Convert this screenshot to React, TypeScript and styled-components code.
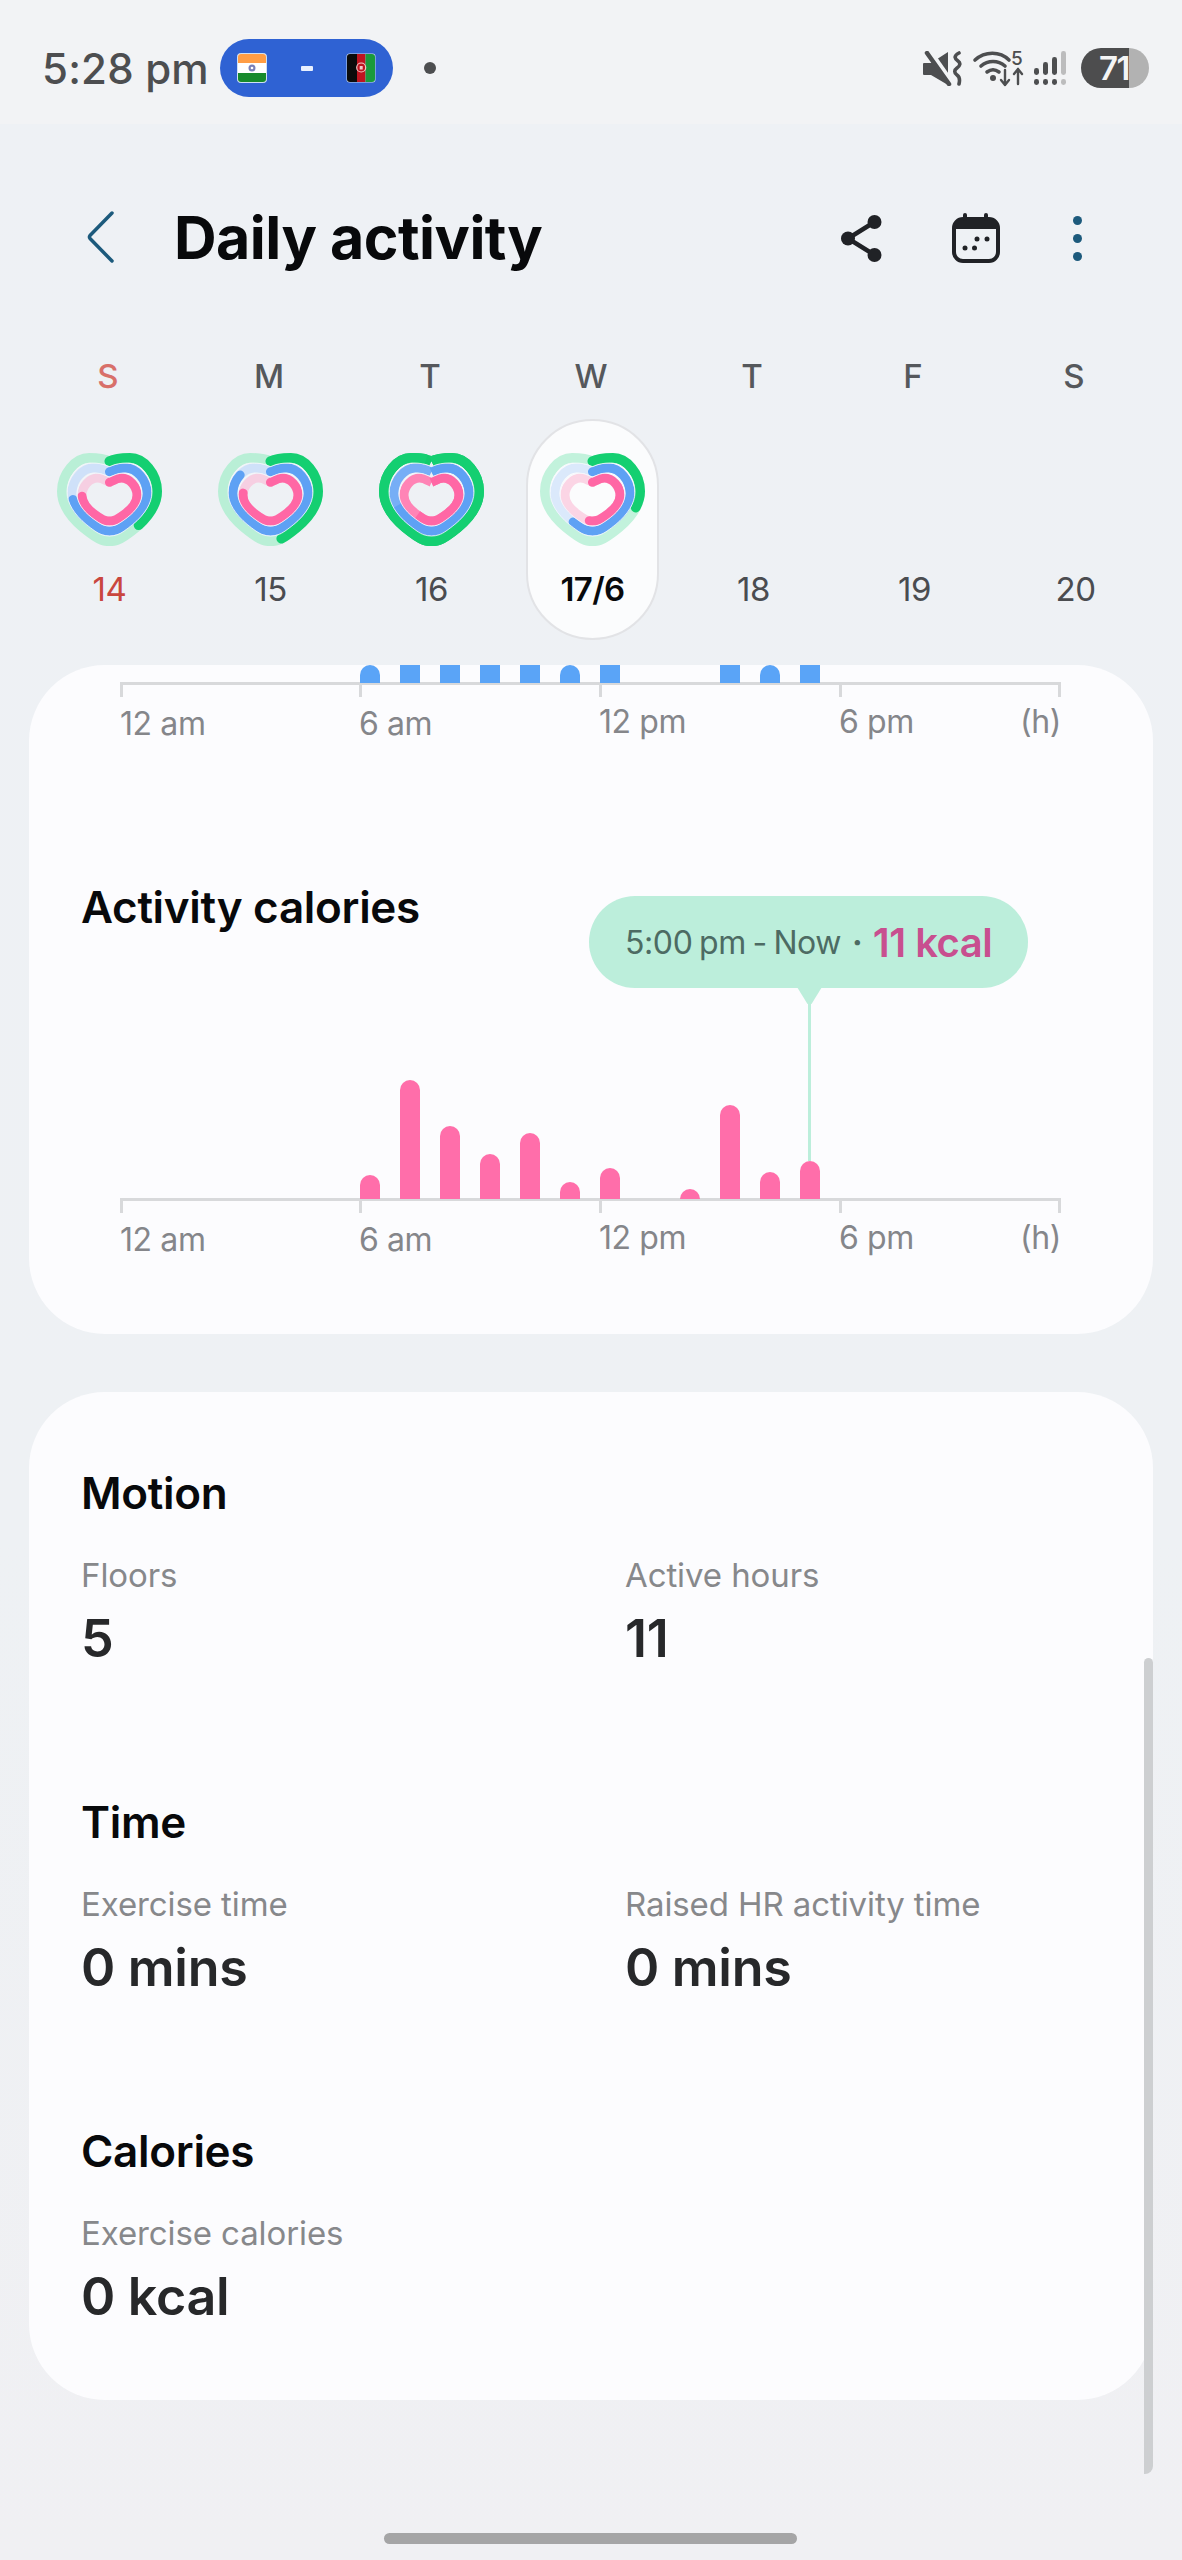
import React from "react";
import styled, { createGlobalStyle } from "styled-components";

const Global = createGlobalStyle`
  html, body { margin: 0; padding: 0; background: #f0f1f4; }
  * { box-sizing: border-box; }
  body { font-family: Inter, "Noto Sans", sans-serif; }
`;

const Screen = styled.div`
  position: relative;
  width: 1182px;
  height: 2560px;
  overflow: hidden;
  background: linear-gradient(180deg, #eef1f5 0%, #eef1f4 60%, #f0f0f3 100%);
`;

const StatusBar = styled.div`
  height: 124px;
  background: #f2f3f5;
  display: flex;
  align-items: center;
  padding: 12px 33px 0 42px;
`;
const Clock = styled.div`
  font-size: 42px;
  font-weight: 500;
  color: #4d4e50;
  letter-spacing: 0.2px;
  width: 178px;
  white-space: nowrap;
`;
const MatchPill = styled.div`
  width: 173px;
  height: 58px;
  border-radius: 29px;
  background: #2f62d3;
  display: flex;
  align-items: center;
  justify-content: space-between;
  padding: 0 17px;
`;
const Dash = styled.span`
  width: 12px;
  height: 5px;
  background: #e8f0ff;
  border-radius: 1px;
`;
const StatusDot = styled.span`
  width: 12px;
  height: 12px;
  border-radius: 50%;
  background: #4d4e50;
  margin-left: 31px;
`;
const StatusIcons = styled.div`
  margin-left: auto;
  display: flex;
  align-items: center;
  gap: 11px;
`;
const Battery = styled.div`
  width: 68px;
  height: 40px;
  border-radius: 20px;
  margin-left: 4px;
  background: linear-gradient(90deg, #4d4d4e 0 48px, #b2b2b2 48px 100%);
  color: #f4f4f4;
  font-size: 33px;
  font-weight: 600;
  line-height: 40px;
  padding-left: 18px;
  letter-spacing: -1.5px;
`;

const Header = styled.header`
  height: 116px;
  margin-top: 56px;
  display: flex;
  align-items: center;
  padding: 0 100px 0 87px;
`;
const BackIcon = styled.svg`
  width: 27px;
  height: 52px;
  flex: none;
  margin-bottom: 2px;
`;
const Title = styled.h1`
  margin: 0 0 0 60px;
  font-size: 59px;
  font-weight: 700;
  color: #08090b;
  letter-spacing: -0.5px;
  line-height: 72px;
`;
const Actions = styled.div`
  margin-left: auto;
  display: flex;
  align-items: center;
`;
const ShareIcon = styled.svg`
  width: 41px;
  height: 47px;
`;
const CalendarIcon = styled.svg`
  width: 48px;
  height: 50px;
  margin-left: 70px;
`;
const KebabIcon = styled.svg`
  width: 9px;
  height: 45px;
  margin-left: 73px;
`;

const Week = styled.div`
  display: grid;
  grid-template-columns: repeat(7, 161px);
  padding: 60px 0 0 29px;
`;
const DayCol = styled.div`
  display: flex;
  flex-direction: column;
  align-items: center;
`;
const DayLetter = styled.div<{ $sun?: boolean }>`
  height: 40px;
  line-height: 40px;
  font-size: 33px;
  font-weight: 500;
  padding-right: 3px;
  color: ${(p) => (p.$sun ? "#d8706a" : "#55585c")};
`;
const DayPill = styled.div<{ $selected?: boolean }>`
  width: 133px;
  height: 221px;
  margin-top: 23px;
  border-radius: 67px;
  padding-top: 34px;
  display: flex;
  flex-direction: column;
  align-items: center;
  background: ${(p) => (p.$selected ? "#fbfcfd" : "transparent")};
  border: 2px solid ${(p) => (p.$selected ? "#e2e3e6" : "transparent")};
`;
const HeartSlot = styled.div`
  width: 105px;
  height: 93px;
  margin-top: -2px;
`;
const DayNum = styled.div<{ $sun?: boolean; $selected?: boolean }>`
  margin-top: 23px;
  height: 40px;
  line-height: 40px;
  font-size: 33px;
  font-weight: ${(p) => (p.$selected ? 600 : 400)};
  letter-spacing: ${(p) => (p.$selected ? "-0.6px" : "-0.4px")};
  color: ${(p) => (p.$sun ? "#c9473e" : p.$selected ? "#08090b" : "#4a4c50")};
`;

const Card = styled.section<{ $top: number; $height: number }>`
  width: 1124px;
  height: ${(p) => p.$height}px;
  margin: ${(p) => p.$top}px 0 0 29px;
  background: #fcfcfe;
  border-radius: 76px;
  overflow: hidden;
  padding-left: 52px;
`;
const Plot = styled.div<{ $height: number }>`
  width: 941px;
  height: ${(p) => p.$height}px;
  margin-left: 39px;
  display: grid;
  grid-template-columns: repeat(24, 40px);
  grid-template-rows: 100%;
  align-items: end;
  overflow: hidden;
`;
const Bar = styled.div<{ $color: string; $flat?: boolean }>`
  width: 20px;
  background: ${(p) => p.$color};
  border-radius: ${(p) => (p.$flat ? "0" : "10px 10px 0 0")};
`;
const Axis = styled.div`
  width: 941px;
  margin-left: 39px;
  display: grid;
  grid-template-columns: 239px 240px 240px 110px 112px;
  border-top: 3px solid #d8d9db;
  margin-top: -1px;
`;
const AxisCell = styled.div<{ $end?: boolean }>`
  display: flex;
  flex-direction: column;
  align-items: ${(p) => (p.$end ? "flex-end" : "flex-start")};
`;
const Tick = styled.div`
  width: 3px;
  height: 12px;
  background: #d8d9db;
`;
const AxisLabel = styled.div<{ $low?: boolean }>`
  margin-top: ${(p) => (p.$low ? 7 : 5)}px;
  line-height: 40px;
  font-size: 32px;
  font-weight: 400;
  letter-spacing: -0.4px;
  color: #85868a;
`;
const CaloriesBlock = styled.div`
  position: relative;
  margin-top: 137px;
`;
const ChartTitle = styled.h2`
  margin: 0 0 66px;
  height: 52px;
  line-height: 52px;
  font-size: 44px;
  font-weight: 600;
  color: #08090b;
  letter-spacing: -0.3px;
`;
const Tooltip = styled.div`
  position: absolute;
  left: 508px;
  top: 15px;
  width: 439px;
  height: 92px;
  border-radius: 46px;
  background: #bceedb;
  display: flex;
  align-items: center;
  padding-left: 36px;
  white-space: nowrap;
`;
const TooltipPointer = styled.div`
  position: absolute;
  left: 208px;
  top: 91px;
  width: 25px;
  height: 17px;
  background: #bceedb;
  clip-path: polygon(0 0, 100% 0, 58% 100%, 42% 100%);
`;
const TooltipStem = styled.div`
  position: absolute;
  left: 219px;
  top: 106px;
  width: 3px;
  height: 159px;
  background: #bceedb;
`;
const TooltipTime = styled.span`
  font-size: 32px;
  letter-spacing: -0.4px;
  word-spacing: -2px;
  color: #4d6b63;
`;
const TooltipSep = styled.span`
  font-size: 32px;
  font-weight: 700;
  color: #4d6b63;
  margin: 0 10px 0 11px;
`;
const TooltipValue = styled.span`
  font-size: 40px;
  font-weight: 600;
  letter-spacing: -0.5px;
  color: #c84f8f;
`;

const StatBody = styled.div`
  padding-top: 74px;
`;
const Stat = styled.div`
  height: 329px;
`;
const StatHeading = styled.h3`
  margin: 0;
  height: 54px;
  line-height: 54px;
  font-size: 44px;
  font-weight: 600;
  color: #08090b;
  letter-spacing: -0.3px;
`;
const StatGrid = styled.div`
  display: grid;
  grid-template-columns: 544px 1fr;
  margin-top: 33px;
`;
const StatLabel = styled.div`
  height: 44px;
  line-height: 44px;
  font-size: 33px;
  letter-spacing: -0.1px;
  color: #87888b;
`;
const StatValue = styled.div`
  margin-top: 10px;
  height: 64px;
  line-height: 64px;
  font-size: 52px;
  font-weight: 600;
  letter-spacing: -0.3px;
  color: #27282a;
`;

const Scrollbar = styled.div`
  position: absolute;
  left: 1144px;
  top: 1658px;
  width: 9px;
  height: 816px;
  background: #cdcfd1;
  border-radius: 5px 5px 9px 0;
`;
const HomeBar = styled.div`
  position: absolute;
  left: 384px;
  top: 2533px;
  width: 413px;
  height: 11px;
  border-radius: 6px;
  background: #a5a5a6;
`;

const heartPath = (hw: number, hh: number, dip: number) => {
  const pt = (u: number, v: number) => `${(52.5 + u * hw).toFixed(2)} ${(46.5 + v * hh).toFixed(2)}`;
  const side = (s: number) => [
    [s * 0.14, -(dip + 0.08), s * 0.28, -1, s * 0.43, -1],
    [s * 0.72, -1, s, -0.62, s, -0.2],
    [s, 0.1, s * 0.82, 0.42, s * 0.55, 0.68],
    [s * 0.4, 0.82, s * 0.28, 0.93, s * 0.17, 0.97],
  ];
  const c = (a: number[]) => `C${pt(a[0], a[1])} ${pt(a[2], a[3])} ${pt(a[4], a[5])}`;
  const left = [
    [-0.07, 1.01, 0.07, 1.01, 0.17, 0.97],
  ];
  const right = side(1);
  return [
    `M${pt(0, -dip)}`,
    ...right.map(c),
    `C${pt(0.07, 1.01)} ${pt(-0.07, 1.01)} ${pt(-0.17, 0.97)}`,
    `C${pt(-0.28, 0.93)} ${pt(-0.4, 0.82)} ${pt(-0.55, 0.68)}`,
    `C${pt(-0.82, 0.42)} ${pt(-1, 0.1)} ${pt(-1, -0.2)}`,
    `C${pt(-1, -0.62)} ${pt(-0.72, -1)} ${pt(-0.43, -1)}`,
    `C${pt(-0.28, -1)} ${pt(-0.14, -(dip + 0.08))} ${pt(0, -dip)}`,
  ].join(" ") + (left.length ? "" : "");
};

type Ring = { hw: number; hh: number; dip: number; w: number; on: string; off: string; soft: string; full: string; part: number };
const RINGS: Ring[] = [
  { hw: 47.5, hh: 41.5, dip: 0.92, w: 10, on: "#14cf71", off: "#b9efd6", soft: "#c2f2dc", full: "#12ca6c", part: 98 },
  { hw: 37.5, hh: 31.5, dip: 0.88, w: 9, on: "#5ea1f4", off: "#cfe1f9", soft: "#dbe9fb", full: "#76aef6", part: 70 },
  { hw: 27.5, hh: 21.5, dip: 0.8, w: 9, on: "#ff67a5", off: "#f6cfe2", soft: "#fbd5e5", full: "#ff84b6", part: 60 },
];
const HAIRS = [
  { hw: 42.5, hh: 36.5, dip: 0.9 },
  { hw: 32.5, hh: 26.5, dip: 0.84 },
];

const Heart = ({ values, light }: { values: number[]; light?: boolean }) => (
  <svg width="105" height="93" viewBox="0 0 105 93" fill="none">
    {RINGS.map((r, i) => {
      const d = heartPath(r.hw, r.hh, r.dip);
      const v = values[i];
      const done = v >= 100;
      return (
        <g key={i}>
          <path d={d} stroke={done ? r.full : light ? r.soft : r.off} strokeWidth={r.w} />
          <path
            d={d}
            stroke={r.on}
            strokeWidth={r.w}
            strokeLinecap={done ? "butt" : "round"}
            pathLength={100}
            strokeDasharray={`${done ? r.part : v} 100`}
          />
        </g>
      );
    })}
    {HAIRS.map((h) => (
      <path key={h.hw} d={heartPath(h.hw, h.hh, h.dip)} stroke="#f4f8fd" strokeWidth={0.9} opacity={0.9} />
    ))}
  </svg>
);

const IndiaFlag = () => (
  <svg width="30" height="30" viewBox="0 0 30 30">
    <rect x="0.5" y="0.5" width="29" height="29" rx="3" fill="#fff" stroke="#cfe0f5" />
    <path d="M1 4a3 3 0 0 1 3-3h22a3 3 0 0 1 3 3v6H1z" fill="#ff9d45" />
    <path d="M1 20h28v6a3 3 0 0 1-3 3H4a3 3 0 0 1-3-3z" fill="#178a2c" />
    <circle cx="15" cy="15" r="3.500" fill="#7a80b8" />
    <circle cx="15" cy="15" r="1.300" fill="#fff" />
  </svg>
);
const AfghanFlag = () => (
  <svg width="30" height="30" viewBox="0 0 30 30">
    <rect x="0.5" y="0.5" width="29" height="29" rx="3" fill="#c8d8ee" />
    <path d="M1 4a3 3 0 0 1 3-3h7v28H4a3 3 0 0 1-3-3z" fill="#0b0b0b" />
    <rect x="11" y="1" width="8.500" height="28" fill="#bf1420" />
    <path d="M19.500 1H26a3 3 0 0 1 3 3v22a3 3 0 0 1-3 3h-6.500z" fill="#1a9a3c" />
    <circle cx="15.200" cy="14.500" r="4.500" fill="none" stroke="#f4c9c9" strokeWidth="1.200" />
    <rect x="13.700" y="13" width="3" height="3.500" fill="#f4c9c9" />
  </svg>
);

const MuteIcon = () => (
  <svg width="39" height="35" viewBox="0 0 39 35" fill="none">
    <path d="M0 13a1 1 0 0 1 1-1h7L25 1v33L8 24H1a1 1 0 0 1-1-1z" fill="#4d4e50" />
    <path d="M0 -2L28 38" stroke="#f2f3f5" strokeWidth="6" transform="translate(4 -1)" />
    <path d="M4 2l22 31" stroke="#4d4e50" strokeWidth="4.500" strokeLinecap="round" />
    <path d="M36 2c-6 3-4 6-1 8s2 5-1 7 -3 5 0 7 3 5 2 9" stroke="#4d4e50" strokeWidth="3.600" strokeLinecap="round" />
  </svg>
);
const WifiIcon = () => (
  <svg width="50" height="35" viewBox="0 0 50 35" fill="none" overflow="visible">
    <path d="M2 9C12 0 27 0 36 9" stroke="#4d4e50" strokeWidth="3.600" strokeLinecap="round" />
    <path d="M8 15c7-6 17-6 24 0" stroke="#4d4e50" strokeWidth="3.600" strokeLinecap="round" />
    <path d="M14 21c4-3 8-3 12 0" stroke="#4d4e50" strokeWidth="3.600" strokeLinecap="round" />
    <circle cx="20" cy="27" r="3" fill="#4d4e50" />
    <text x="38" y="14" fontSize="19" fontFamily="Inter, sans-serif" fontWeight="500" fill="#4d4e50">5</text>
    <path d="M32 19v15M28 29l4 5 4-5" stroke="#4d4e50" strokeWidth="2.400" strokeLinecap="round" strokeLinejoin="round" />
    <path d="M45 33V18M41 23l4-5 4 5" stroke="#4d4e50" strokeWidth="2.400" strokeLinecap="round" strokeLinejoin="round" />
  </svg>
);
const SignalIcon = () => (
  <svg width="32" height="35" viewBox="0 0 32 35" fill="#4d4e50">
    <rect x="0" y="17" width="5" height="7" rx="2.400" />
    <rect x="9" y="11" width="5" height="13" rx="2.400" />
    <rect x="18" y="6" width="5" height="18" rx="2.400" />
    <rect x="27" y="0" width="5" height="24" rx="2.400" fill="#bcbcbd" />
    <rect x="0" y="28" width="5" height="6" rx="2.400" />
    <rect x="9" y="28" width="5" height="6" rx="2.400" />
    <rect x="18" y="28" width="5" height="6" rx="2.400" />
    <rect x="27" y="28" width="5" height="6" rx="2.400" fill="#bcbcbd" />
  </svg>
);

const DAYS = [
  { l: "S", n: "14", sun: true, h: [38, 73, 75] },
  { l: "M", n: "15", h: [46, 85, 77] },
  { l: "T", n: "16", h: [100, 100, 100] },
  { l: "W", n: "17/6", selected: true, h: [30, 60, 52] },
  { l: "T", n: "18" },
  { l: "F", n: "19" },
  { l: "S", n: "20" },
];

const BLUE: Record<number, number> = { 6: 18, 7: 18, 8: 18, 9: 18, 10: 18, 11: 18, 12: 18, 15: 18, 16: 18, 17: 18 };
const BLUE_ROUND = [6, 11, 16];
const PINK: Record<number, number> = { 6: 24, 7: 119, 8: 73, 9: 45, 10: 66, 11: 17, 12: 31, 14: 10, 15: 94, 16: 27, 17: 38 };
const HOURS = Array.from({ length: 24 }, (_, i) => i);

const AxisRow = () => (
  <Axis>
    <AxisCell><Tick /><AxisLabel $low>12 am</AxisLabel></AxisCell>
    <AxisCell><Tick /><AxisLabel $low>6 am</AxisLabel></AxisCell>
    <AxisCell><Tick /><AxisLabel>12 pm</AxisLabel></AxisCell>
    <AxisCell><Tick /><AxisLabel>6 pm</AxisLabel></AxisCell>
    <AxisCell $end><Tick /><AxisLabel>(h)</AxisLabel></AxisCell>
  </Axis>
);

export default function App() {
  return (
    <Screen>
      <Global />
      <StatusBar>
        <Clock>5:28 pm</Clock>
        <MatchPill>
          <IndiaFlag />
          <Dash />
          <AfghanFlag />
        </MatchPill>
        <StatusDot />
        <StatusIcons>
          <MuteIcon />
          <WifiIcon />
          <SignalIcon />
          <Battery>71</Battery>
        </StatusIcons>
      </StatusBar>

      <Header>
        <BackIcon viewBox="0 0 27 52" fill="none">
          <path d="M25 2L3 24.500a2.500 2.500 0 0 0 0 3L25 50" stroke="#1c5a7c" strokeWidth="3.500" strokeLinecap="round" strokeLinejoin="round" />
        </BackIcon>
        <Title>Daily activity</Title>
        <Actions>
          <ShareIcon viewBox="0 0 41 47" fill="none">
            <path d="M33.500 7L7 23.500 33.500 40" stroke="#202226" strokeWidth="4.500" />
            <circle cx="33.500" cy="7" r="7" fill="#202226" />
            <circle cx="7" cy="23.500" r="7" fill="#202226" />
            <circle cx="33.500" cy="40" r="7" fill="#202226" />
          </ShareIcon>
          <CalendarIcon viewBox="0 0 48 50" fill="none">
            <rect x="2" y="6" width="44" height="42" rx="9" stroke="#202226" strokeWidth="4" />
            <path d="M2 15a9 9 0 0 1 9-9h26a9 9 0 0 1 9 9v1H2z" fill="#202226" />
            <rect x="11" y="0" width="4" height="8" rx="2" fill="#202226" />
            <rect x="32" y="0" width="4" height="8" rx="2" fill="#202226" />
            <circle cx="13" cy="35" r="2.500" fill="#202226" />
            <circle cx="22.500" cy="35" r="2.500" fill="#202226" />
            <circle cx="25" cy="26" r="2.500" fill="#202226" />
            <circle cx="35" cy="26" r="2.500" fill="#202226" />
          </CalendarIcon>
          <KebabIcon viewBox="0 0 9 45" fill="#1c5a7c">
            <circle cx="4.500" cy="4.500" r="4.500" />
            <circle cx="4.500" cy="22.500" r="4.500" />
            <circle cx="4.500" cy="40.500" r="4.500" />
          </KebabIcon>
        </Actions>
      </Header>

      <Week>
        {DAYS.map((d) => (
          <DayCol key={d.n}>
            <DayLetter $sun={d.sun}>{d.l}</DayLetter>
            <DayPill $selected={d.selected}>
              <HeartSlot>{d.h && <Heart values={d.h} light={d.selected} />}</HeartSlot>
              <DayNum $sun={d.sun} $selected={d.selected}>{d.n}</DayNum>
            </DayPill>
          </DayCol>
        ))}
      </Week>

      <Card $top={25} $height={669}>
        <Plot $height={18}>
          {HOURS.map((h) =>
            BLUE[h] ? (
              <Bar key={h} $color="#5aa4f7" $flat={!BLUE_ROUND.includes(h)} style={{ height: BLUE[h] }} />
            ) : (
              <span key={h} />
            )
          )}
        </Plot>
        <AxisRow />
        <CaloriesBlock>
          <ChartTitle>Activity calories</ChartTitle>
          <Plot $height={200}>
            {HOURS.map((h) =>
              PINK[h] ? <Bar key={h} $color="#ff6eaa" style={{ height: PINK[h] }} /> : <span key={h} />
            )}
          </Plot>
          <AxisRow />
          <Tooltip>
            <TooltipTime>5:00 pm - Now</TooltipTime>
            <TooltipSep>·</TooltipSep>
            <TooltipValue>11 kcal</TooltipValue>
            <TooltipPointer />
            <TooltipStem />
          </Tooltip>
        </CaloriesBlock>
      </Card>

      <Card $top={58} $height={1008}>
        <StatBody>
          <Stat>
            <StatHeading>Motion</StatHeading>
            <StatGrid>
              <div><StatLabel>Floors</StatLabel><StatValue>5</StatValue></div>
              <div><StatLabel>Active hours</StatLabel><StatValue>11</StatValue></div>
            </StatGrid>
          </Stat>
          <Stat>
            <StatHeading>Time</StatHeading>
            <StatGrid>
              <div><StatLabel>Exercise time</StatLabel><StatValue>0 mins</StatValue></div>
              <div><StatLabel>Raised HR activity time</StatLabel><StatValue>0 mins</StatValue></div>
            </StatGrid>
          </Stat>
          <Stat>
            <StatHeading>Calories</StatHeading>
            <StatGrid>
              <div><StatLabel>Exercise calories</StatLabel><StatValue>0 kcal</StatValue></div>
            </StatGrid>
          </Stat>
        </StatBody>
      </Card>

      <Scrollbar />
      <HomeBar />
    </Screen>
  );
}
